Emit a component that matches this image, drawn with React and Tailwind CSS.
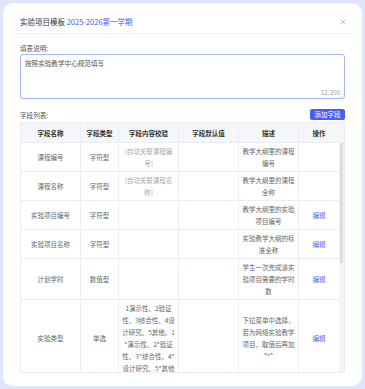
import React from "react";

const FONT = { fontFamily: '"Noto Sans CJK SC", "Noto Sans", sans-serif' };

const rows = [
  { name: ["课程编号"], type: ["字符型"], check: ["[自动关联课程编", "号]"], checkGray: true, desc: ["教学大纲里的课程", "编号"], op: "" },
  { name: ["课程名称"], type: ["字符型"], check: ["[自动关联课程名", "称]"], checkGray: true, desc: ["教学大纲里的课程", "全称"], op: "" },
  { name: ["实验项目编号"], type: ["字符型"], check: [], desc: ["教学大纲里的实验", "项目编号"], op: "编辑" },
  { name: ["实验项目名称"], type: ["字符型"], check: [], desc: ["实验教学大纲的标", "准全称"], op: "编辑" },
  { name: ["计划学时"], type: ["数值型"], check: [], desc: ["学生一次完成该实", "验项目需要的学时", "数"], op: "编辑" },
  {
    name: ["实验类型"],
    type: ["单选"],
    check: ["1演示性、2验证", "性、3综合性、4设", "计研究、5其他、1", "*演示性、2*验证", "性、3*综合性、4*", "设计研究、5*其他"],
    desc: ["下拉菜单中选择，", "若为网络实验教学", "项目，取值后再加", "\u201C*\u201D"],
    op: "编辑",
  },
];

const cols = "grid grid-cols-[60px_38px_60px_60px_60px_1fr]";

function Cell({ lines = [], className = "", last = false }) {
  return (
    <div
      className={`flex flex-col items-center justify-center text-center px-[1px] py-[2px] leading-[12px] whitespace-nowrap ${
        last ? "" : "border-r border-[#ebeef5]"
      } ${className}`}
    >
      {lines.map((l, i) => (
        <span key={i}>{l}</span>
      ))}
    </div>
  );
}

export default function App() {
  return (
    <div className="w-[365px] h-[389px] bg-[#dfe5fc] p-[3px]" style={FONT}>
      <div className="w-[359px] h-[383px] bg-white rounded-[10px] flex flex-col">
        {/* header */}
        <div className="mx-[11px] h-[31px] pt-[7px] px-[6px] flex items-center justify-between border-b border-[#f0f1f4]">
          <div className="text-[7.5px] text-[#333] leading-[11px]">
            实验项目模板 <span className="text-[#4b5cf0]">2025-2026第一学期</span>
          </div>
          <svg width="6" height="6" viewBox="0 0 6 6" className="mr-[-1px]">
            <path d="M0.5 0.5L5.5 5.5M5.5 0.5L0.5 5.5" stroke="#b0b0b0" strokeWidth="0.8" />
          </svg>
        </div>

        {/* body */}
        <div className="px-[17px] pt-[9px] flex flex-col">
          <div className="text-[6.6px] leading-[10px] text-[#555]">填表说明:</div>
          <div className="relative mt-[1px] h-[45px] border border-[#a9b3f8] rounded-[3px] px-[4px] pt-[3px] text-[6.6px] leading-[10px] text-[#555]">
            按照实验教学中心规范填写
            <span className="absolute right-[4px] bottom-[1px] text-[6px] leading-[8px] text-[#999]">12/200</span>
            <svg width="4" height="4" viewBox="0 0 4 4" className="absolute right-[0px] bottom-[0px]">
              <path d="M3.5 0.5L0.5 3.5M3.5 2L2 3.5" stroke="#c0c0c0" strokeWidth="0.5" />
            </svg>
          </div>

          <div className="mt-[10px] flex items-center justify-between h-[11px]">
            <div className="text-[6.6px] leading-[10px] text-[#555]">字段列表:</div>
            <div className="h-[11px] w-[35px] bg-[#4b5cf5] rounded-[2px] text-white text-[6.6px] leading-[11px] text-center">
              添加字段
            </div>
          </div>

          {/* table */}
          <div className="mt-[2px] border border-[#ebeef5] text-[6.5px] flex flex-col">
            <div className={`${cols} h-[20px] bg-[#f5f6f8] border-b border-[#ebeef5] text-[#333] font-semibold`}>
              <Cell lines={["字段名称"]} />
              <Cell lines={["字段类型"]} />
              <Cell lines={["字段内容校验"]} />
              <Cell lines={["字段默认值"]} />
              <Cell lines={["描述"]} />
              <Cell last lines={["操作"]} className="pr-[6px]" />
            </div>
            <div className="flex h-[229px] overflow-hidden">
              <div className="flex-1 flex flex-col">
                {rows.map((r, i) => (
                  <div
                    key={i}
                    className={`${cols} shrink-0 border-b border-[#ebeef5] text-[#666] ${i < 4 ? "min-h-[29px]" : ""}`}
                  >
                    <Cell lines={r.name} />
                    <Cell lines={r.type} />
                    <Cell lines={r.check} className={r.checkGray ? "text-[#a8a8a8]" : ""} />
                    <Cell lines={[]} />
                    <Cell lines={r.desc} />
                    <Cell last lines={r.op ? [r.op] : []} className="text-[#5565f2]" />
                  </div>
                ))}
              </div>
              <div className="w-[5px] bg-[#f4f4f4] flex flex-col items-center">
                <div className="w-[3px] h-[120px] bg-[#dcdcdc] rounded-[1px]" />
              </div>
            </div>
          </div>
        </div>
      </div>
    </div>
  );
}
